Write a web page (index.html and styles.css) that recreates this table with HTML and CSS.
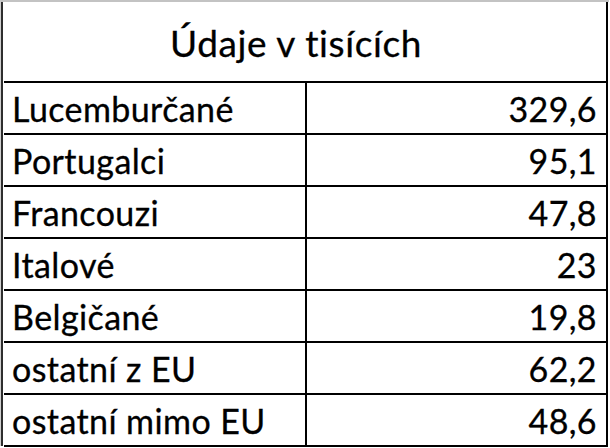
FILE: index.html
```html
<!DOCTYPE html>
<html lang="cs">
<head>
<meta charset="utf-8">
<title>Údaje v tisících</title>
<link rel="stylesheet" href="styles.css">
</head>
<body>
<div class="frame">
  <div class="sheet">
    <table class="data">
      <thead>
        <tr><th colspan="2" class="title">Údaje v tisících</th></tr>
      </thead>
      <tbody>
        <tr><td class="name">Lucemburčané</td><td class="num">329,6</td></tr>
        <tr><td class="name">Portugalci</td><td class="num">95,1</td></tr>
        <tr><td class="name">Francouzi</td><td class="num">47,8</td></tr>
        <tr><td class="name">Italové</td><td class="num">23</td></tr>
        <tr><td class="name">Belgičané</td><td class="num">19,8</td></tr>
        <tr><td class="name">ostatní z EU</td><td class="num">62,2</td></tr>
        <tr><td class="name">ostatní mimo EU</td><td class="num">48,6</td></tr>
      </tbody>
    </table>
  </div>
</div>
</body>
</html>
```
FILE: styles.css
```css
html, body {
  margin: 0;
  padding: 0;
  background: #ffffff;
}
body {
  width: 610px;
  height: 448px;
  overflow: hidden;
  font-family: Lato, "Open Sans", sans-serif;
  color: #000;
}
.frame {
  border-top: 2px solid #c3c3c3;
  border-left: 1px solid #d0d0d0;
  width: 609px;
  height: 446px;
  box-sizing: border-box;
  padding-right: 2px;
}
.sheet {
  border-left: 2px solid #2e2e2e;
  box-sizing: border-box;
  height: 100%;
  padding-left: 1px;
  background: #fff;
}
.data {
  border-collapse: collapse;
  width: 604px;
  table-layout: fixed;
  border-right: 2px solid #000;
  border-bottom: 2px solid #000;
}
.data th, .data td {
  padding: 0;
}
.title {
  height: 80px;
  font-size: 37px;
  font-weight: 400;
  text-align: center;
  letter-spacing: 0.6px;
  border-bottom: 2px solid #000;
  padding: 2px 18px 0 0 !important;
  box-sizing: border-box;
  -webkit-text-stroke: 0.3px #000;
}
.data tbody tr {
  height: 52px;
}
.data tbody td {
  border-bottom: 2px solid #000;
  font-size: 34px;
  letter-spacing: 0.4px;
  height: 50px;
  box-sizing: border-box;
  -webkit-text-stroke: 0.3px #000;
}
.name {
  width: 335px;
  padding-left: 8px !important;
  border-right: 2px solid #000;
}
.num {
  text-align: right;
  padding-right: 9px !important;
}
```
